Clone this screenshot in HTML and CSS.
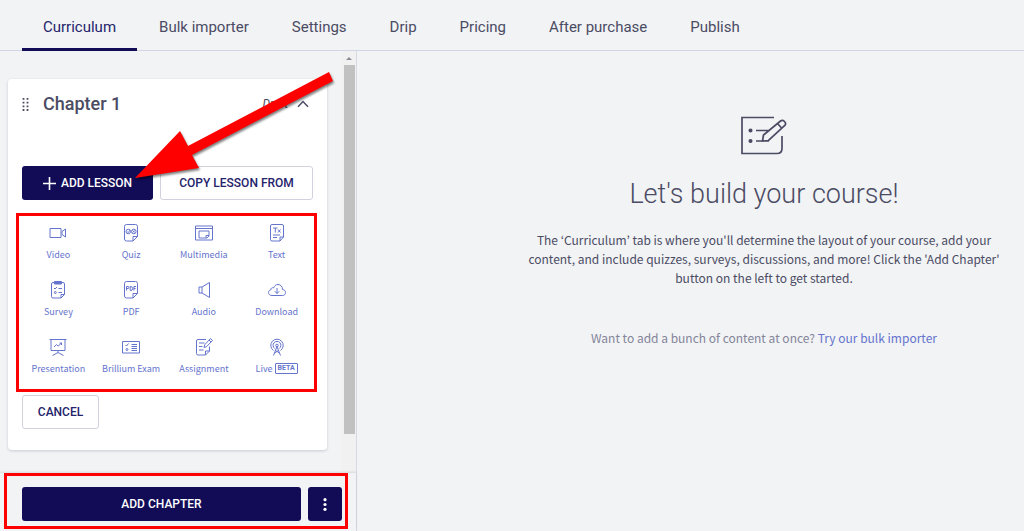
FILE: index.html
```html
<!DOCTYPE html>
<html lang="en">
<head>
<meta charset="utf-8">
<meta name="viewport" content="width=device-width, initial-scale=1">
<title>Course builder</title>
<link rel="stylesheet" href="styles.css">
</head>
<body>
<nav class="tabs" aria-label="Course sections">
  <a class="tab active" href="#curriculum" aria-current="page">Curriculum</a>
  <a class="tab" href="#bulk">Bulk importer</a>
  <a class="tab" href="#settings">Settings</a>
  <a class="tab" href="#drip">Drip</a>
  <a class="tab" href="#pricing">Pricing</a>
  <a class="tab" href="#after">After purchase</a>
  <a class="tab" href="#publish">Publish</a>
</nav>
<div class="builder">
  <aside class="sidebar">
    <div class="scroller">
      <div class="chapters">
        <section class="card">
          <header class="card-head">
            <svg class="grip" width="7" height="13" viewBox="0 0 7 13" aria-hidden="true"><path d="M1.5 0v13M5.5 0v13" stroke="#4b4b63" stroke-width="1.8" stroke-dasharray="1.8 1.9"/></svg>
            <h2>Chapter 1</h2>
            <span class="status">Draft</span>
            <button class="collapse" type="button" aria-label="Collapse chapter"><svg width="12" height="8" viewBox="0 0 12 8" fill="none" stroke="#4b4b63" stroke-width="1.5"><path d="M1 6.7 6 1.5l5 5.2"/></svg></button>
          </header>
          <div class="actions">
            <button class="btn primary add-lesson" type="button"><svg width="13" height="13" viewBox="0 0 13 13" stroke="#fff" stroke-width="1.6" aria-hidden="true"><path d="M6.5 0v13M0 6.5h13"/></svg>ADD LESSON</button>
            <button class="btn outline copy" type="button">COPY LESSON FROM</button>
          </div>
          <div class="types">
            <button class="type" type="button"><svg viewBox="0 0 20 20"><path d="M2 5.500h11v9H2zM14 8.500l3.500-2.500v8L14 11.500z"/></svg><span>Video</span></button>
            <button class="type" type="button"><svg viewBox="0 0 20 20"><path d="M5.500 1.500h9q2 0 2 2v10l-4.500 4.500h-6.500q-2 0-2-2v-12.500q0-2 2-2zM16.500 13.500h-4.500v4.500"/><circle cx="7.300" cy="8.500" r="2.300"/><circle cx="12.800" cy="8.500" r="2.300"/><path d="m6 8.400 1.200 1.200 1.900-2.500M11.700 7.400l2.200 2.200m0-2.200-2.200 2.200"/></svg><span>Quiz</span></button>
            <button class="type" type="button"><svg viewBox="0 0 20 20"><path d="M1.500 3h17v14h-17zM1.500 5.500h17M5 8h10v5l-2 2H5zM15 12.500h-3V15"/></svg><span>Multimedia</span></button>
            <button class="type" type="button"><svg viewBox="0 0 20 20"><path d="M5 1.500h10q1.500 0 1.500 1.500v11l-3.500 4H5q-1.500 0-1.500-1.500V3q0-1.500 1.500-1.500zM16.500 14H13v4M6 5h4.500M8.300 5v4.500M11 6.500l2.500 3m0-3-2.500 3M6 12h7M6 14.500h4"/></svg><span>Text</span></button>
            <button class="type" type="button"><svg viewBox="0 0 20 20"><path d="M6.500 2.500H5q-1.500 0-1.500 1.500v12.500q0 1.500 1.500 1.500h8l3.500-3.500V4q0-1.500-1.500-1.500h-1.500M16.500 14.500H13V18M6 8l1 1 2-2M10.500 8.500H14M10.500 12.500H14"/><path class="solid" d="M6.500 1.500h7v2.500h-7z"/><circle cx="7.300" cy="12.500" r="1"/></svg><span>Survey</span></button>
            <button class="type" type="button"><svg viewBox="0 0 20 20"><path d="M5.500 1.500h9q2 0 2 2v10l-4.500 4.500h-6.500q-2 0-2-2v-12.500q0-2 2-2zM16.500 13.500h-4.500v4.500M5.500 10.500v-4H7q1 0 1 1t-1 1H5.500M9.200 6.500v4h.8q1.500 0 1.500-2t-1.500-2zM12.900 10.500v-4H15M12.900 8.500h1.700"/></svg><span>PDF</span></button>
            <button class="type" type="button"><svg viewBox="0 0 20 20"><path d="M5 7H8l7.500-4.500v15L8 13H5zM8 7v6"/></svg><span>Audio</span></button>
            <button class="type" type="button"><svg viewBox="0 0 20 20"><path d="M5 15.500h10.500c2 0 3-1.300 3-3s-1.200-2.800-3-3c0-3-1.800-5-4.500-5-2.200 0-3.700 1.400-4.200 3.300-1.800-.5-3 .4-3 2-1.500.4-2.300 1.400-2.300 2.700 0 1.800 1.500 3 3.500 3zM10 8v5.500m-2.200-2.200L10 13.500l2.200-2.200"/></svg><span>Download</span></button>
            <button class="type" type="button"><svg viewBox="0 0 20 20"><path d="M1.500 2.500h17M3 2.500v11h14v-11M10 13.500v2M4.500 18.500l5.500-3 5.500 3M6 10l2.500-2.500 1.500 1.700L13.500 6m-2 0h2v2"/></svg><span>Presentation</span></button>
            <button class="type" type="button"><svg viewBox="0 0 20 20"><path d="M1.500 4.500h17v11.500h-17zM4.500 8l1 1 2-2.500M10.500 7.500H16M10.500 9.500H16M10.500 11.500H16M10.500 13.500H16"/><circle cx="6" cy="12.500" r="1"/></svg><span>Brillium Exam</span></button>
            <button class="type" type="button"><svg viewBox="0 0 20 20"><path d="M12 2.500H4q-1.500 0-1.500 1.500v12.500Q2.500 18 4 18h7.500l4-4V9.500M15.500 14h-4v4M5 6h5.500M5 9.500h3.500M5 13h4.500M10 10.500l.8-2.800L16.500 1.500l2 2-6 6.200zM15 3l2 2"/></svg><span>Assignment</span></button>
            <button class="type" type="button"><svg viewBox="0 0 20 20"><path d="M6.500 13.500a6.200 6.200 0 1 1 7 0M7.800 11.500a3.900 3.900 0 1 1 4.400 0M6.500 18.500 10 9.500l3.500 9M7.500 16l4-2.500M12.500 16l-4-2.500"/><circle cx="10" cy="8.500" r="1.300"/></svg><span class="live">Live <b>BETA</b></span></button>
          </div>
          <button class="btn outline cancel" type="button">CANCEL</button>
        </section>
      </div>
      <div class="scrollbar" aria-hidden="true"><i class="scroll-up"></i><i class="thumb"></i></div>
    </div>
    <footer class="footer">
      <div class="footer-frame">
        <button class="btn primary add-chapter" type="button">ADD CHAPTER</button>
        <button class="btn primary more" type="button" aria-label="More options"><svg width="4" height="13" viewBox="0 0 4 13" fill="#fff"><circle cx="2" cy="1.700" r="1.600"/><circle cx="2" cy="6.500" r="1.600"/><circle cx="2" cy="11.300" r="1.600"/></svg></button>
      </div>
    </footer>
    <svg class="arrow" viewBox="0 0 206 120" aria-hidden="true"><path d="M5 107 50 60l8 15L199 1l4 9L62 84l7 13z"/></svg>
  </aside>
  <main class="intro">
    <svg width="48" height="40" viewBox="0 0 48 40" fill="none" stroke="#4b4b63" stroke-width="1.700" aria-hidden="true"><path d="M34 1.500H2v36h35q5 0 5-5V20M16 14.500h14M16 25h13M22.500 25l1-6L40.500 5q2-1.500 4 .5t.3 4L28.500 24.500zM37.500 7.500l4.500 5"/><circle cx="10.500" cy="14.500" r="1.200" fill="#4b4b63"/><circle cx="10.500" cy="25" r="1.200" fill="#4b4b63"/></svg>
    <h1>Let's build your course!</h1>
    <p class="lead">The ‘Curriculum’ tab is where you'll determine the layout of your course, add your content, and include quizzes, surveys, discussions, and more! Click the 'Add Chapter' button on the left to get started.</p>
    <p class="hint">Want to add a bunch of content at once? <a href="#bulk">Try our bulk importer</a></p>
  </main>
</div>
</body>
</html>
```
FILE: styles.css
```css
* { box-sizing: border-box; }
body {
  margin: 0;
  min-height: 100vh;
  display: flex;
  flex-direction: column;
  background: #f1f3f5;
  color: #4b4b63;
  font: 12px/19px "Noto Sans CJK KR", "Noto Sans", sans-serif;
}
button { font: inherit; color: inherit; padding: 0; border: 0; background: none; cursor: pointer; }
h1, h2, p { margin: 0; }
a { color: #6574cd; text-decoration: none; }
svg { flex: none; }

.tabs { display: flex; gap: 1px; height: 51px; padding-left: 22px; border-bottom: 1px solid #d2d5e3; }
.tab {
  height: 51px;
  padding: 0 21px;
  color: #4b4b63;
  font: 15px/54px Roboto, sans-serif;
  white-space: nowrap;
}
.tab.active { color: #25236b; border-bottom: 3px solid #120c57; }

.builder { display: flex; flex: 1; }
.sidebar {
  position: relative;
  display: flex;
  flex-direction: column;
  flex: none;
  width: 357px;
  border-right: 1px solid #d6d8e2;
}
.scroller { display: flex; flex: 1; }
.chapters { flex: 1; padding: 28px 15px 23px 8px; }
.card {
  padding: 12px 14px 21px;
  background: #fff;
  border-radius: 4px;
  box-shadow: 0 1px 3px rgba(40, 45, 80, .2);
}
.card-head { display: flex; align-items: center; height: 26px; padding-right: 4px; }
.card-head h2 { margin: 0 auto 0 14px; font: 500 18px/26px Roboto, sans-serif; }
.status { margin-right: 9px; font: italic 12px/26px Roboto, sans-serif; }
.collapse { display: flex; }

.btn {
  display: flex;
  align-items: center;
  justify-content: center;
  height: 34px;
  border-radius: 3px;
  font: 500 12px/34px Roboto, sans-serif;
  white-space: nowrap;
}
.primary { background: #120c57; color: #fff; }
.outline { border: 1px solid #d2d2df; background: #fff; color: #25236b; }
.actions { display: flex; gap: 7px; margin-top: 49px; }
.add-lesson { flex: 132; gap: 5px; }
.copy { flex: 152; }
.types {
  display: grid;
  grid-template-columns: repeat(4, 1fr);
  row-gap: 5px;
  margin: 13px -4px 3px -6px;
  padding: 7px 1px 0 3px;
  border: 3px solid #fe0000;
}
.type {
  display: flex;
  flex-direction: column;
  align-items: center;
  gap: 2px;
  height: 52px;
  padding-bottom: 2px;
  color: #6574cd;
  font-size: 9px;
  line-height: 19px;
  white-space: nowrap;
}
.type svg { width: 20px; height: 20px; fill: none; stroke: currentColor; stroke-width: 1; }
.type .solid { fill: currentColor; }
.live { display: flex; align-items: center; gap: 2px; }
.live b { padding: 0 2px; border: 1px solid; border-radius: 1px; font: 700 7px/9px Roboto, sans-serif; }
.cancel { width: 77px; }

.scrollbar { display: flex; flex-direction: column; align-items: center; width: 14px; padding: 6px 0 39px; background: #f1f1f1; }
.scroll-up { margin-bottom: 5px; border: 3px solid transparent; border-top: 0; border-bottom: 3px solid #8c8c96; }
.thumb { flex: 1; width: 11px; background: #c1c1c1; }

.footer { padding: 0 8px 2px 4px; box-shadow: 0 -1px 2px rgba(40, 45, 80, .12); }
.footer-frame { display: flex; gap: 7px; padding: 11px 3px 5px 15px; border: 3px solid #fe0000; }
.add-chapter { flex: 1; }
.more { width: 34px; }

.arrow {
  position: absolute;
  top: 20px;
  left: 130px;
  width: 206px;
  fill: #fe0000;
  filter: drop-shadow(1px 2px 1px rgba(0, 0, 0, .5));
  pointer-events: none;
}

.intro { flex: 1; display: flex; flex-direction: column; align-items: center; padding: 65px 16px 0 163px; text-align: center; }
.intro h1 { margin: 20px 0 18px; font: 300 27px/36px Roboto, sans-serif; }
.lead { max-width: 488px; }
.hint { margin-top: 41px; color: #85859a; }
```
